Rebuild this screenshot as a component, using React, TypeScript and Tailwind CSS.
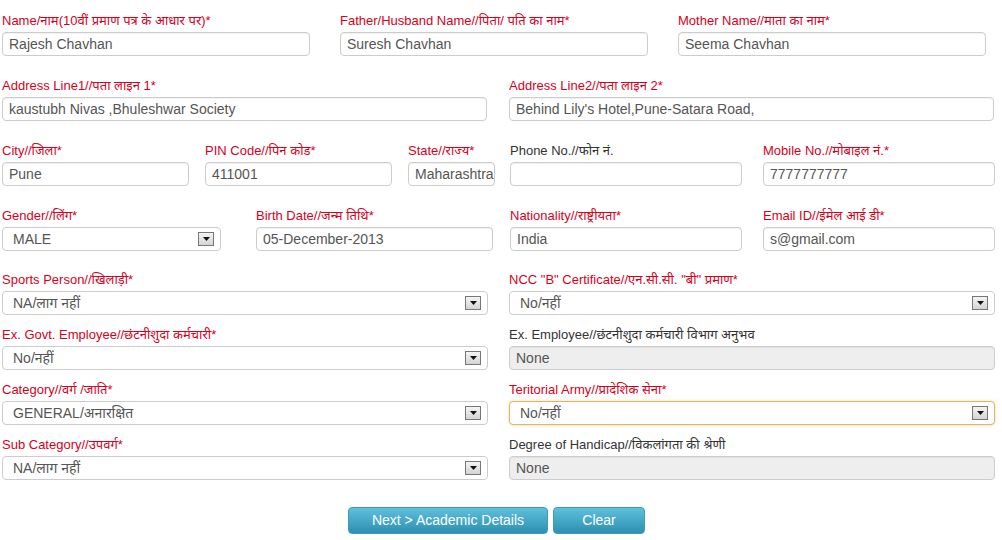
const font = { fontFamily: '"Liberation Sans", Arial, "Noto Sans", sans-serif' };

function Label({ text, req = true }: { text: string; req?: boolean }) {
  return (
    <div className={`h-[17px] pt-[1px] text-[13px] leading-[16px] whitespace-nowrap overflow-hidden ${req ? "text-[#d6001c]" : "text-[#333]"}`}>
      {text}
    </div>
  );
}

function Input({ label, value = "", req = true, disabled = false, w }: { label: string; value?: string; req?: boolean; disabled?: boolean; w: string }) {
  return (
    <div className={`flex flex-col gap-[3px] ${w}`}>
      <Label text={label} req={req} />
      <div
        className={`h-[24px] rounded-[4px] border border-[#ccc] px-[6px] text-[14px] leading-[22px] text-[#555] whitespace-nowrap overflow-hidden shadow-[inset_0_1px_1px_rgba(0,0,0,0.06)] ${disabled ? "bg-[#eee]" : "bg-white"}`}
      >
        {value}
      </div>
    </div>
  );
}

function Select({ label, value, w, focus = false }: { label: string; value: string; w: string; focus?: boolean }) {
  return (
    <div className={`flex flex-col gap-[3px] ${w}`}>
      <Label text={label} />
      <div
        className={`h-[24px] rounded-[4px] border flex items-center justify-between pl-[10px] pr-[6px] text-[14px] text-[#555] bg-white ${focus ? "border-[#e6b45a] shadow-[0_0_3px_rgba(230,170,70,0.5)]" : "border-[#ccc]"}`}
      >
        <span className="leading-[22px] whitespace-nowrap">{value}</span>
        <span className="w-[16px] h-[14px] border border-[#777] bg-gradient-to-b from-[#f4f4f4] to-[#d4d4d4] flex items-center justify-center">
          <svg width="7" height="4" viewBox="0 0 7 4">
            <path d="M0 0 L7 0 L3.5 4 Z" fill="#111" />
          </svg>
        </span>
      </div>
    </div>
  );
}

function Btn({ text, w }: { text: string; w: string }) {
  return (
    <div className={`${w} h-[27px] rounded-[4px] bg-gradient-to-b from-[#5fc0dc] to-[#2c90b0] border border-[#3b9dbb] text-white text-[14px] flex items-center justify-center`}>
      {text}
    </div>
  );
}

export default function App() {
  return (
    <div style={font} className="w-[1002px] h-[540px] bg-white pt-[12px] pl-[2px] overflow-hidden">
      <div className="flex flex-col gap-[21px]">
        <div className="flex gap-[30px]">
          <Input w="w-[308px]" label="Name/नाम(10वीं प्रमाण पत्र के आधार पर)*" value="Rajesh Chavhan" />
          <Input w="w-[308px]" label="Father/Husband Name//पिता/ पति का नाम*" value="Suresh Chavhan" />
          <Input w="w-[308px]" label="Mother Name//माता का नाम*" value="Seema Chavhan" />
        </div>
        <div className="flex gap-[22px]">
          <Input w="w-[485px]" label="Address Line1//पता लाइन 1*" value="kaustubh Nivas ,Bhuleshwar Society" />
          <Input w="w-[485px]" label="Address Line2//पता लाइन 2*" value="Behind Lily's Hotel,Pune-Satara Road," />
        </div>
        <div className="flex">
          <div className="flex gap-[16px] w-[508px]">
            <Input w="w-[187px]" label="City//जिला*" value="Pune" />
            <Input w="w-[187px]" label="PIN Code//पिन कोड*" value="411001" />
            <Input w="w-[87px]" label="State//राज्य*" value="Maharashtra" />
          </div>
          <div className="flex gap-[21px]">
            <Input w="w-[232px]" req={false} label="Phone No.//फोन नं." />
            <Input w="w-[232px]" label="Mobile No.//मोबाइल नं.*" value="7777777777" />
          </div>
        </div>
        <div className="flex">
          <div className="flex gap-[35px] w-[508px]">
            <Select w="w-[219px]" label="Gender//लिंग*" value="MALE" />
            <Input w="w-[237px]" label="Birth Date//जन्म तिथि*" value="05-December-2013" />
          </div>
          <div className="flex gap-[21px]">
            <Input w="w-[232px]" label="Nationality//राष्ट्रीयता*" value="India" />
            <Input w="w-[232px]" label="Email ID//ईमेल आई डी*" value="s@gmail.com" />
          </div>
        </div>
      </div>
      <div className="flex flex-col gap-[11px] mt-[20px]">
        <div className="flex gap-[21px]">
          <Select w="w-[486px]" label="Sports Person//खिलाड़ी*" value="NA/लाग नहीं" />
          <Select w="w-[486px]" label={'NCC "B" Certificate//एन.सी.सी. "बी" प्रमाण*'} value="No/नहीं" />
        </div>
        <div className="flex gap-[21px]">
          <Select w="w-[486px]" label="Ex. Govt. Employee//छंटनीशुदा कर्मचारी*" value="No/नहीं" />
          <Input w="w-[486px]" req={false} disabled label="Ex. Employee//छंटनीशुदा कर्मचारी विभाग अनुभव" value="None" />
        </div>
        <div className="flex gap-[21px]">
          <Select w="w-[486px]" label="Category//वर्ग /जाति*" value="GENERAL/अनारक्षित" />
          <Select w="w-[486px]" focus label="Teritorial Army//प्रादेशिक सेना*" value="No/नहीं" />
        </div>
        <div className="flex gap-[21px]">
          <Select w="w-[486px]" label="Sub Category//उपवर्ग*" value="NA/लाग नहीं" />
          <Input w="w-[486px]" req={false} disabled label="Degree of Handicap//विकलांगता की श्रेणी" value="None" />
        </div>
      </div>
      <div className="flex gap-[5px] mt-[27px] pl-[346px]">
        <Btn w="w-[200px]" text="Next > Academic Details" />
        <Btn w="w-[92px]" text="Clear" />
      </div>
    </div>
  );
}
